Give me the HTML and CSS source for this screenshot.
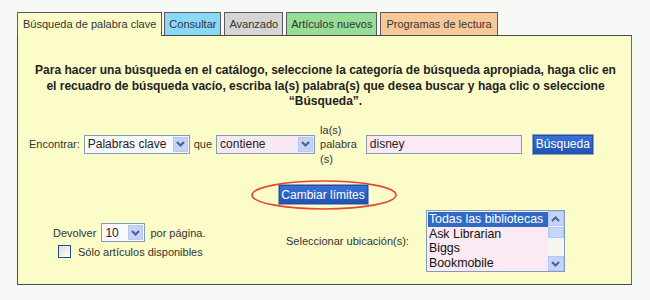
FILE: index.html
```html
<!DOCTYPE html>
<html lang="es">
<head>
    <meta charset="UTF-8">
    <title>Búsqueda de palabra clave</title>
    <link rel="stylesheet" href="styles.css">
</head>
<body>
    <div class="tabs">
        <div class="tab tab-active">Búsqueda de palabra clave</div>
        <div class="tab tab-blue">Consultar</div>
        <div class="tab tab-grey">Avanzado</div>
        <div class="tab tab-green">Artículos nuevos</div>
        <div class="tab tab-peach">Programas de lectura</div>
    </div>

    <div class="panel">
        <p class="intro">Para hacer una búsqueda en el catálogo, seleccione la categoría de búsqueda apropiada, haga clic en el recuadro de búsqueda vacío, escriba la(s) palabra(s) que desea buscar y haga clic o seleccione “Búsqueda”.</p>

        <div class="find-row">
            <span class="lbl">Encontrar:</span>
            <div class="select sel-type"><span class="sel-text">Palabras clave</span><span class="arrow"><svg width="9" height="6" viewBox="0 0 9 6"><path d="M1 1 L4.5 4.5 L8 1" fill="none" stroke="#4d6185" stroke-width="2"/></svg></span></div>
            <span class="lbl">que</span>
            <div class="select sel-op"><span class="sel-text">contiene</span><span class="arrow"><svg width="9" height="6" viewBox="0 0 9 6"><path d="M1 1 L4.5 4.5 L8 1" fill="none" stroke="#4d6185" stroke-width="2"/></svg></span></div>
            <span class="lbl lbl-words">la(s)<br>palabra<br>(s)</span>
            <div class="text-input">disney</div>
            <button class="btn btn-search">Búsqueda</button>
        </div>

        <div class="limits">
            <span class="ring-wrap">
                <button class="btn btn-limits">Cambiar límites</button>
                <svg class="ring" width="148" height="32" viewBox="0 0 148 32"><ellipse cx="74" cy="16" rx="72" ry="14" fill="none" stroke="#e8452a" stroke-width="1.6"/></svg>
            </span>
        </div>

        <div class="bottom">
            <div class="opts">
                <div class="opt-row">
                    <span class="lbl">Devolver</span>
                    <div class="select sel-num"><span class="sel-text">10</span><span class="arrow"><svg width="9" height="6" viewBox="0 0 9 6"><path d="M1 1 L4.5 4.5 L8 1" fill="none" stroke="#4d6185" stroke-width="2"/></svg></span></div>
                    <span class="lbl">por página.</span>
                </div>
                <label class="check-row"><span class="checkbox"></span>Sólo artículos disponibles</label>
            </div>
            <div class="locs">
                <span class="lbl">Seleccionar ubicación(s):</span>
                <div class="listbox">
                    <div class="items">
                        <div class="item item-sel">Todas las bibliotecas</div>
                        <div class="item">Ask Librarian</div>
                        <div class="item">Biggs</div>
                        <div class="item">Bookmobile</div>
                    </div>
                    <div class="scrollbar">
                        <span class="sb-btn"><svg width="9" height="6" viewBox="0 0 9 6"><path d="M1 5 L4.5 1.5 L8 5" fill="none" stroke="#4d6185" stroke-width="2"/></svg></span>
                        <span class="sb-thumb"></span>
                        <span class="sb-track"></span>
                        <span class="sb-btn"><svg width="9" height="6" viewBox="0 0 9 6"><path d="M1 1 L4.5 4.5 L8 1" fill="none" stroke="#4d6185" stroke-width="2"/></svg></span>
                    </div>
                </div>
            </div>
        </div>
    </div>
</body>
</html>
```

FILE: styles.css
```css
body {
    margin: 0;
    padding: 12px 0 0 17px;
    background-color: #f7f9f7;
    font-family: 'Liberation Sans', Arial, sans-serif;
    font-size: 11px;
    color: #333;
}

.tabs {
    display: flex;
    gap: 3px;
    align-items: flex-end;
}

.tab {
    height: 23px;
    line-height: 22px;
    padding: 0 4px;
    border: 1px solid #5a5a5a;
    border-bottom: none;
    font-size: 11px;
    color: #333;
    box-sizing: border-box;
    white-space: nowrap;
}

.tab-active {
    height: 24px;
    background-color: #fcfcc8;
    margin-bottom: -1px;
    margin-right: -1px;
    position: relative;
    padding: 0 5px;
}

.tab-blue { background-color: #8ad8f8; }
.tab-grey { background-color: #d6d4d4; }
.tab-green { background-color: #96de96; }
.tab-peach { background-color: #f9c898; padding: 0 5px; }

.panel {
    width: 615px;
    height: 250px;
    box-sizing: border-box;
    border: 1px solid #4a4a4a;
    border-right-color: #6a6a6a;
    background-color: #fcfcc8;
    padding: 0 0 0 11px;
}

.intro {
    margin: 27px 12px 0 3px;
    text-align: center;
    font-weight: bold;
    font-size: 12px;
    line-height: 15.5px;
    color: #222;
}

.lbl {
    color: #333;
    white-space: nowrap;
}

.find-row {
    display: flex;
    align-items: center;
    gap: 4px;
    margin-top: 13px;
}

.lbl-words {
    line-height: 14.5px;
    margin: 0 5px 0 1px;
}

.select {
    display: flex;
    align-items: center;
    height: 19px;
    box-sizing: border-box;
    border: 1px solid #7f9db9;
    background-color: #fbf8fb;
    padding: 0 1px 0 3px;
    font-size: 12px;
    color: #222;
}

.sel-text {
    flex: 1;
    white-space: nowrap;
}

.arrow {
    width: 15px;
    height: 15px;
    background-color: #c3d3fb;
    border: 1px solid #b8c8ef;
    box-sizing: border-box;
    display: flex;
    align-items: center;
    justify-content: center;
}

.sel-type { width: 106px; }
.sel-op { width: 99px; background-color: #f8e8f2; }
.sel-num { width: 44px; }

.text-input {
    width: 156px;
    height: 19px;
    box-sizing: border-box;
    border: 1px solid #7f9db9;
    background-color: #fbeaf4;
    padding: 0 3px;
    line-height: 17px;
    font-size: 12px;
    color: #222;
}

.btn {
    font-family: 'Liberation Sans', Arial, sans-serif;
    font-size: 12px;
    color: #fff;
    background: linear-gradient(#3b74d6, #1f52b0);
    border: 1px solid #8fa3c0;
    box-shadow: inset 0 0 0 1px #1e4ea8;
    padding: 0 3px;
    white-space: nowrap;
    cursor: pointer;
}

.btn-search {
    height: 21px;
    margin-left: 6px;
}

.limits {
    display: flex;
    justify-content: center;
    margin: 18px 14px 0 0;
}

.ring-wrap {
    position: relative;
    display: inline-block;
}

.btn-limits {
    height: 21px;
    width: 91px;
    padding: 0;
    display: block;
}

.ring {
    position: absolute;
    left: -28px;
    top: -5px;
    pointer-events: none;
}

.bottom {
    display: flex;
    margin-top: 5px;
}

.opts {
    padding: 13px 0 0 24px;
    width: 233px;
}

.opt-row {
    display: flex;
    align-items: center;
    gap: 5px;
}

.check-row {
    display: flex;
    align-items: center;
    gap: 7px;
    margin: 3px 0 0 5px;
    color: #333;
}

.checkbox {
    width: 11px;
    height: 11px;
    border: 1px solid #1c5180;
    background: linear-gradient(135deg, #dcdcd7, #fff);
}

.locs {
    display: flex;
    align-items: center;
    gap: 17px;
}

.listbox {
    display: flex;
    width: 139px;
    height: 62px;
    box-sizing: border-box;
    border: 1px solid #7f9db9;
    background-color: #fbeaf4;
}

.items {
    flex: 1;
    padding: 1px 0 0 1px;
    overflow: hidden;
}

.item {
    font-size: 12.4px;
    line-height: 14.5px;
    color: #111;
    padding-left: 1px;
    white-space: nowrap;
}

.item-sel {
    background-color: #316ac5;
    color: #fff;
}

.scrollbar {
    width: 16px;
    display: flex;
    flex-direction: column;
    background-color: #f5f5f1;
}

.sb-btn {
    height: 15px;
    background-color: #c3d3fb;
    border: 1px solid #b4c6ef;
    box-sizing: border-box;
    display: flex;
    align-items: center;
    justify-content: center;
}

.sb-thumb {
    height: 9px;
    margin-top: 1px;
    background-color: #c6d6fb;
    border: 1px solid #b4c6ef;
}

.sb-track {
    flex: 1;
}
```
